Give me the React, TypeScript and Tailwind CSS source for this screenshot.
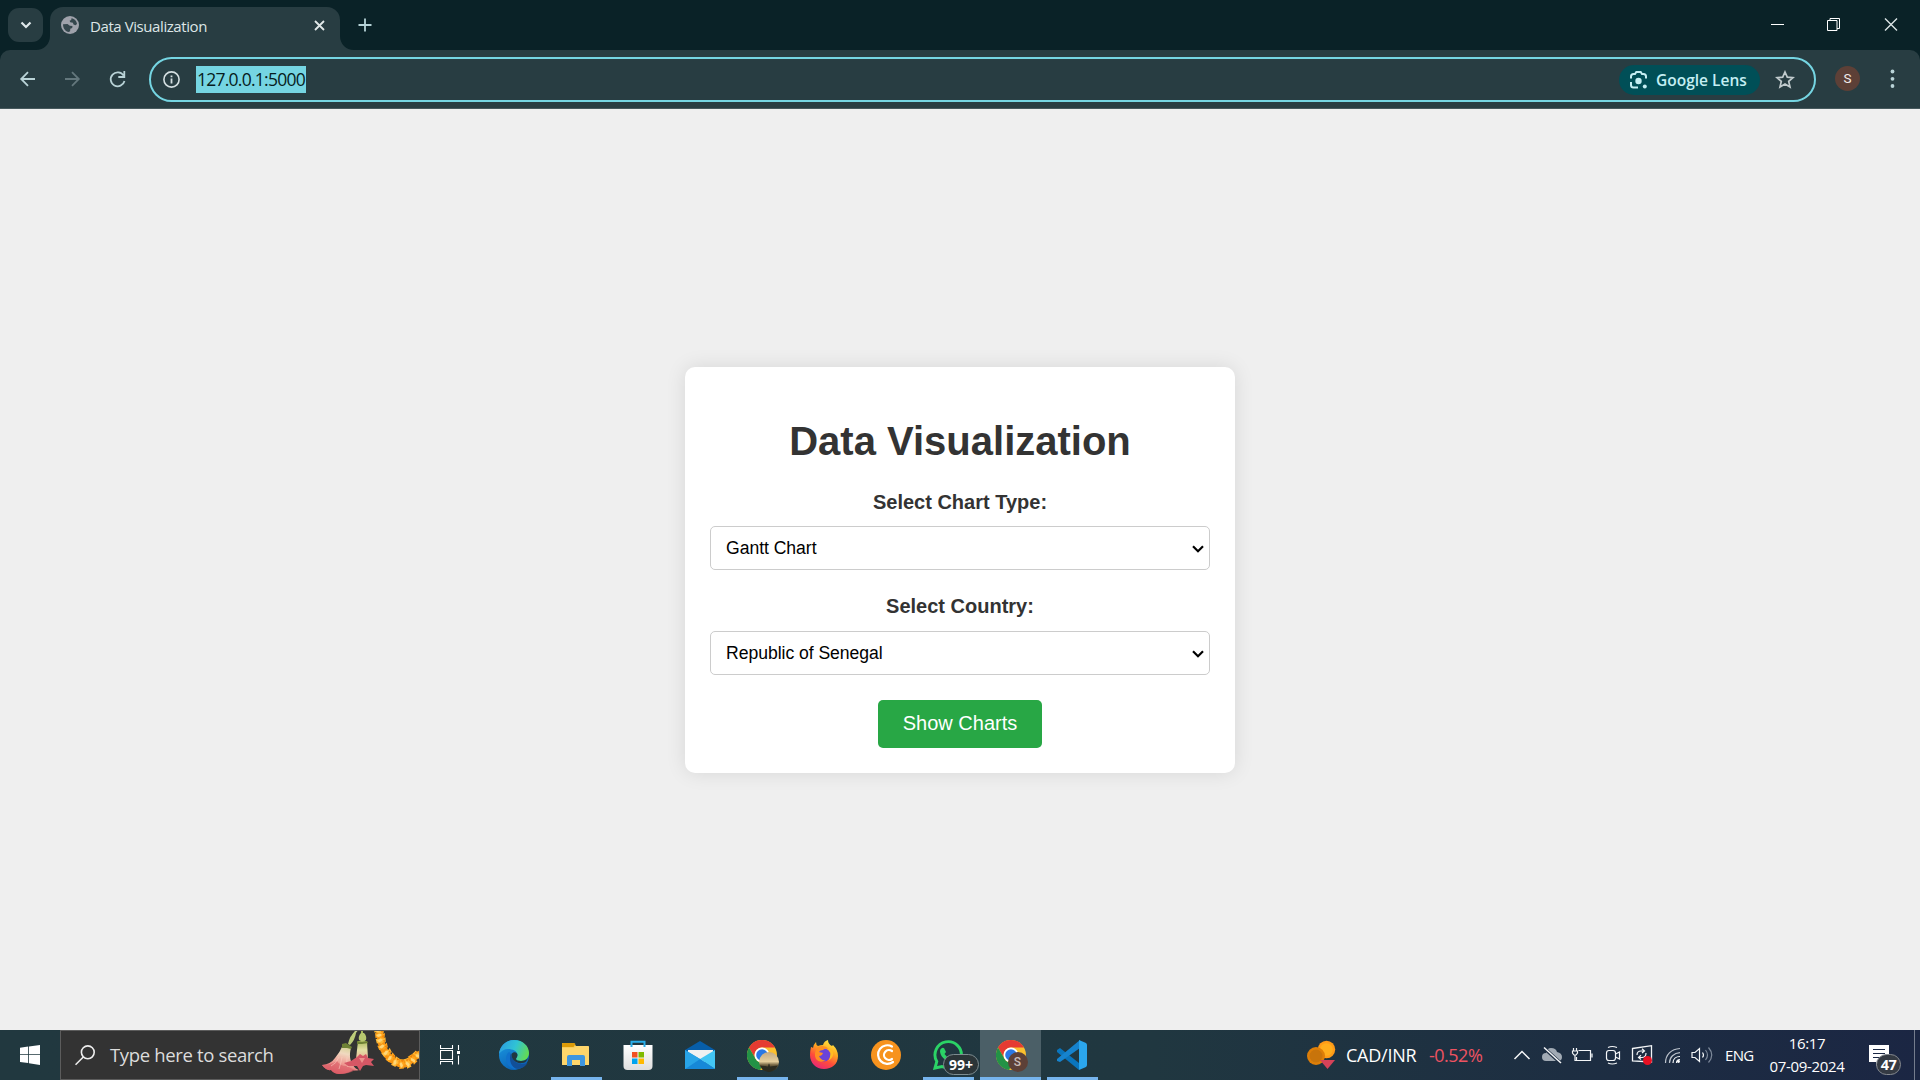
import React from "react";

const SEGOE = "font-['Open_Sans','Noto_Sans',sans-serif]";

function TabStrip() {
  return (
    <div className="flex h-[50px] items-start bg-[#0a2227]">
      <div className="ml-2 mt-2 flex h-[34px] w-[35px] items-center justify-center rounded-[11px] bg-[#283d42]">
        <svg width="12" height="8" viewBox="0 0 12 8" fill="none" stroke="#dfe9eb" strokeWidth="2.2">
          <path d="M1.5 1.5 6 6l4.500-4.500" />
        </svg>
      </div>
      <div className="mt-[7px] flex h-[43px] items-end">
        <svg className="-ml-[7px]" width="14" height="14" viewBox="0 0 14 14">
          <path d="M14 0v14H0C8 14 14 8 14 0z" fill="#283d42" />
        </svg>
        <div className="flex h-[43px] w-[290px] items-center rounded-t-[13px] bg-[#283d42] pb-[7px]">
          <svg className="ml-[11px]" width="18" height="18" viewBox="0 0 18 18">
            <circle cx="9" cy="9" r="9" fill="#9fa2ab" />
            <path d="M10.500 2.200C13.500 2.600 15.800 5 16 8l-1.500 1.200-2-.7-.6-1.700-2.700-.6-.6-1.400 1.600-.8z" fill="#35474d" />
            <path d="M2 8.200 6.500 8l2.300 1.700 2.700.3-.3 2-1.900.7-.2 2.600-1.400.7C4.500 15.300 2 12.500 2 8.200z" fill="#35474d" />
          </svg>
          <span className={`${SEGOE} ml-[11px] w-[119px] whitespace-nowrap pt-px text-[15px] leading-5 tracking-[-0.42px] text-[#dde6e7]`}>Data Visualization</span>
          <svg className="ml-[105px]" width="11" height="11" viewBox="0 0 11 11" stroke="#e1e8e8" strokeWidth="1.800">
            <path d="M1 1l9 9M10 1l-9 9" />
          </svg>
        </div>
        <svg width="14" height="14" viewBox="0 0 14 14">
          <path d="M0 0v14h14C6 14 0 8 0 0z" fill="#283d42" />
        </svg>
      </div>
      <svg className="ml-[4px] mt-[18px]" width="14" height="14" viewBox="0 0 14 14" stroke="#b6d3d7" strokeWidth="1.800">
        <path d="M7 .5v13M.5 7h13" />
      </svg>
      <div className="ml-auto flex h-[50px]">
        <svg width="169" height="50" viewBox="0 0 169 50" fill="none" stroke="#fff">
          <path d="M20 24.500h13M76.500 20.500h9.500v10h-9.500zM79 20.500v-2h9.500v10H86" />
          <path d="M134 18.500l12 12M146 18.500l-12 12" stroke="#dce5e6" strokeWidth="1.400" />
        </svg>
      </div>
    </div>
  );
}

function Toolbar() {
  return (
    <div className="h-[59px] bg-[#0a2227]">
      <div className="flex h-[59px] items-start rounded-t-[10px] border-b border-[#47595d] bg-[#283d42]">
        <svg width="149" height="58" viewBox="0 0 149 58" fill="none" strokeWidth="1.800">
          <path d="M35 29H21.500M28 22.200 21.200 29l6.800 6.800" stroke="#b9d3d7" />
          <path d="M65 29h13.500M72 22.200 78.800 29 72 35.800" stroke="#63777c" />
          <path d="M123.600 25.500A7 7 0 1 0 124.500 31M124.300 21v6h-6" stroke="#b9d3d7" />
        </svg>
        <div className="mt-[7px] flex h-[45px] w-[1667px] items-center rounded-full border-2 border-[#75d5e2]">
          <svg className="ml-3" width="17" height="17" viewBox="0 0 17 17">
            <circle cx="8.500" cy="8.500" r="7.600" fill="none" stroke="#d4dfe1" strokeWidth="1.600" />
            <path d="M7.600 7.500h1.800v5H7.600zM7.600 4.500h1.800v1.800H7.600z" fill="#d4dfe1" />
          </svg>
          <div className="ml-4 flex h-[27px] w-[110px] items-center overflow-hidden bg-[#75d5e2] pl-px">
            <span className={`${SEGOE} whitespace-nowrap text-[17.500px] tracking-[-0.750px] text-[#071c20]`}>127.0.0.1:5000</span>
          </div>
          <div className="ml-auto mr-[19px] flex items-center">
            <div className="mt-px flex h-[30px] w-[141px] items-center rounded-full bg-[#004f57] pl-[10px]">
              <svg width="20" height="20" viewBox="0 0 20 20" fill="none" stroke="#c4eef3" strokeWidth="2">
                <path d="M2 8.500V6.500q0-2.500 2.500-2.500H6l1.300-2h4.400L13 4h1.500Q17 4 17 6.500v2M2 12v3q0 2.500 2.500 2.500H9" />
                <circle cx="9.500" cy="11" r="3.200" fill="#c4eef3" stroke="none" />
                <circle cx="15.800" cy="16.400" r="2" fill="#c4eef3" stroke="none" />
              </svg>
              <span className={`${SEGOE} ml-[7px] whitespace-nowrap pt-px text-[15.500px] font-semibold text-[#c4eef3]`}>Google Lens</span>
            </div>
            <svg className="ml-[15px]" width="20" height="19" viewBox="0 0 20 19" fill="none" stroke="#c1cbcd" strokeWidth="1.700">
              <path d="M10 2 12.300 7.200 18 7.700 13.700 11.400 15 17 10 14 5 17l1.300-5.600L2 7.700l5.700-.5z" />
            </svg>
          </div>
        </div>
        <div className="ml-[19px] mt-4 flex size-[25px] items-center justify-center rounded-full bg-[#5d4037] font-['Roboto',sans-serif] text-[13.500px] text-[#f3ecea]">S</div>
        <svg className="ml-[30px] mt-[19px]" width="5" height="20" viewBox="0 0 5 20" fill="#b9d3d7">
          <circle cx="2.500" cy="2.500" r="1.900" />
          <circle cx="2.500" cy="9.800" r="1.900" />
          <circle cx="2.500" cy="17" r="1.900" />
        </svg>
      </div>
    </div>
  );
}

function SelectBox({ value }: { value: string }) {
  return (
    <div className="flex h-[44px] w-full items-center rounded-[5px] border border-[#ccc] bg-white pl-[15px] pr-[5px] text-[17.600px] text-black">
      <span className="tracking-[-0.040px]">{value}</span>
      <svg className="ml-auto mt-px" width="12" height="8" viewBox="0 0 12 8" fill="none" stroke="#000" strokeWidth="2.200">
        <path d="M1 1.300 6 6.200l5-4.900" />
      </svg>
    </div>
  );
}

function FormCard() {
  return (
    <div className="flex h-[406px] w-[550px] flex-col items-center rounded-[10px] bg-white px-[25px] pt-[51px] font-['Liberation_Sans',Arial,sans-serif] shadow-[0_0_20px_rgba(0,0,0,0.1)]">
      <h1 className="h-[46px] whitespace-nowrap text-[40px] font-bold leading-[46px] text-[#333]">Data Visualization</h1>
      <label className="mt-[26px] h-6 text-[20px] font-bold leading-6 text-[#333]">Select Chart Type:</label>
      <div className="mt-3 w-full"><SelectBox value="Gantt Chart" /></div>
      <label className="mt-[24px] h-6 text-[20px] font-bold leading-6 text-[#333]">Select Country:</label>
      <div className="mt-[13px] w-full"><SelectBox value="Republic of Senegal" /></div>
      <button className="mt-[25px] h-12 w-[164px] rounded-[5px] bg-[#28a745] pb-[2px] text-[20px] text-white">Show Charts</button>
    </div>
  );
}

function SearchArt() {
  const petals = [
    [6, 0, 5], [7, 5, 0], [8, 10, -8], [10, 16, -18], [14, 22, -32], [18, 27, -45],
    [23, 31, -60], [29, 33, -90], [35, 32, -112], [40, 28, -130], [45, 24, -140],
  ];
  return (
    <svg width="98" height="48" viewBox="0 0 98 48" className="ml-auto">
      <defs>
        <linearGradient id="bloom" x1=".7" y1="0" x2=".4" y2="1">
          <stop offset="0" stopColor="#cdd08a" />
          <stop offset=".3" stopColor="#f0d9c0" />
          <stop offset=".62" stopColor="#ef9d94" />
          <stop offset="1" stopColor="#d9525f" />
        </linearGradient>
        <linearGradient id="tube" x1="0" y1="0" x2="0" y2="1">
          <stop offset="0" stopColor="#a9b95c" />
          <stop offset=".5" stopColor="#e3e0a4" />
          <stop offset="1" stopColor="#e9b596" />
        </linearGradient>
      </defs>
      <path d="M36-1 32 4" stroke="#c5d08a" strokeWidth="2" />
      <path d="M34 1q-5 3-7 12l2 1q5-5 6-12z" fill="#bccb78" />
      <path d="M41-1v4" stroke="#a6b75a" strokeWidth="2" />
      <path d="M40 2q-3 3-2 7l4 2 3-2q1-4-2-7z" fill="#b7c76f" />
      <path d="M22 14l8 3c-2 7-1 13 2 17q2 4 6 5-4 1-6 0-6 4-14 4-5 0-8-4-5 1-9-5 9-1 13-7 5-6 8-13z" fill="url(#bloom)" />
      <path d="M1 34q9 0 15-4 3 5 9 5 5 2 9 4-6 4-15 4-6 0-9-4-5 1-9-5z" fill="#dc5f69" opacity=".65" />
      <path d="M10 35q5-2 8-9M18 38q2-6 3-12M27 36q-2-4-1-10" stroke="#fbd0c4" strokeWidth=".8" fill="none" opacity=".7" />
      <path d="M37 10h9l1 18H35z" fill="url(#tube)" />
      <path d="M36 26l3-3 3 2 3-2 2 4 6 1-3 3 3 4-8-1-3 1-3 5-3-5-9 0-4-3 7-2z" fill="#d65765" />
      <path d="M38 27l3 5 3-5" fill="#ec918c" />
      <path d="M21 13l4-1 6 4-1 2-4-1-5 0zM36 10l5 1 5-1 1 2-6 1-5 0z" fill="#6f8235" />
      <g transform="translate(52 0)">
        <path d="M6-3 8 11q4 15 15 20 8 5 15-2 4-4 9-6" fill="none" stroke="#f79412" strokeWidth="7" />
        {petals.map(([x, y, r], i) => (
          <g key={i} transform={`translate(${x} ${y}) rotate(${r})`}>
            <path d="M-5-3l3 1 2-1 3 1 2-1-.5 5-2.500-.5-2 1.500-2-1.500-2.500.5z" fill={i % 2 ? "#ffa51c" : "#ffb935"} />
            <path d="M-4-1 0-2.500 2-1 0 .5-2 1z" fill="#ffd678" />
            <path d="M2 0l2-1-.5 3z" fill="#ee7d05" />
          </g>
        ))}
      </g>
    </svg>
  );
}

function EdgeIcon() {
  return (
    <svg width="30" height="30" viewBox="0 0 30 30">
      <defs>
        <linearGradient id="edgeTop" x1="0" y1=".3" x2="1" y2=".6">
          <stop offset="0" stopColor="#2b9de0" />
          <stop offset=".5" stopColor="#30c3d5" />
          <stop offset="1" stopColor="#65dc4e" />
        </linearGradient>
        <linearGradient id="edgeMid" x1="0" y1="0" x2=".5" y2="1">
          <stop offset="0" stopColor="#1b9be4" />
          <stop offset="1" stopColor="#0b63b7" />
        </linearGradient>
      </defs>
      <circle cx="15" cy="15" r="15" fill="url(#edgeMid)" />
      <path d="M0 14C1 5 8 0 15 0c9 0 15 6 15 13 0 5-4 8-8 8-3 0-5-1-5-2 0-1 1.500-2 1.500-4 0-4-5-6-9.500-6-4 0-7 2-9 5z" fill="url(#edgeTop)" />
      <path d="M12 13c-3 3-3 9 1 13 3 3 8 4 13 0 1-1 2-2 2.500-3-9 3.500-16-2-16.500-10z" fill="#124f98" />
      <path d="M10 12c-4 3-4 10 0 14 2 2 5 3.500 8 3.500-4-2-7-6-7-11 0-2 0-3 1-5z" fill="#1071cc" />
      <path d="M12.500 14c2-3 6-2 6 1 0 2-1.500 3-1.500 4s2 2 5 2c3 0 5.500-1 7-3-1 3-3 5-6 5-6 1-11-4-10.500-9z" fill="#21373f" />
    </svg>
  );
}

function ExplorerIcon() {
  return (
    <svg width="30" height="30" viewBox="0 0 30 30">
      <path d="M1 4q0-1 1-1h11l2 3h11q2 0 2 2v17H1z" fill="#f9cc57" />
      <path d="M1 4q0-1 1-1h11l1.500 1-2 3H1z" fill="#dc9b08" />
      <path d="M1 8h12l2-2h12q1 0 1 1v17q0 1-1 1H2q-1 0-1-1z" fill="#fed66b" />
      <path d="M6 26V17q0-2 2-2h14q2 0 2 2v9h-5v-6h-8v6z" fill="#3e96df" />
    </svg>
  );
}

function StoreIcon() {
  return (
    <svg width="30" height="30" viewBox="0 0 30 30">
      <defs>
        <linearGradient id="bag" x1="0" y1="0" x2="0" y2="1">
          <stop offset="0" stopColor="#fff" />
          <stop offset="1" stopColor="#dedede" />
        </linearGradient>
      </defs>
      <path d="M.5 5h29v21q0 4-4 4h-21q-4 0-4-4z" fill="url(#bag)" />
      <path d="M8.500 7V1.800h13V7" fill="none" stroke="#28aeea" strokeWidth="2" />
      <path d="M9 12h5.500v5.500H9z" fill="#f25022" />
      <path d="M15.500 12H21v5.500h-5.500z" fill="#7fba00" />
      <path d="M9 18.500h5.500V24H9z" fill="#00a4ef" />
      <path d="M15.500 18.500H21V24h-5.500z" fill="#ffb900" />
    </svg>
  );
}

function MailIcon() {
  return (
    <svg width="30" height="30" viewBox="0 0 30 30">
      <path d="M0 10 15 1l15 9v8H0z" fill="#075ea9" />
      <path d="M3 10h25v12H3z" fill="#f1f1f1" />
      <path d="M0 10 15 19 30 29H0z" fill="#2499df" />
      <path d="M30 10 15 19 30 29z" fill="#43c6f4" />
      <path d="M0 29 15 19l15 10z" fill="#1688d8" />
      <path d="M0 10 15 19 0 29z" fill="#28a4e7" />
    </svg>
  );
}

function ChromeMark() {
  return (
    <>
      <circle cx="15" cy="15" r="15" fill="#fbc02d" />
      <path d="M2 7.500A15 15 0 0 1 28 7.500H15a7.500 7.500 0 0 0-6.500 11.200z" fill="#e53b32" />
      <path d="M2 7.500 8.500 18.800A7.500 7.500 0 0 0 17 22.300L13 30A15 15 0 0 1 2 7.500z" fill="#239246" />
      <circle cx="15" cy="15" r="7.500" fill="#fff" />
      <circle cx="15" cy="15" r="5.800" fill="#2a78e4" />
    </>
  );
}

function ChromeIcon({ profile }: { profile: "photo" | "letter" }) {
  return (
    <div className="relative size-[30px]">
      <svg width="34" height="34" viewBox="0 0 34 34" className="max-w-none">
        <defs>
          <linearGradient id="sunset" x1="0" y1="0" x2="0" y2="1">
            <stop offset="0" stopColor="#c3aa84" />
            <stop offset=".48" stopColor="#e6cf9c" />
            <stop offset=".65" stopColor="#716241" />
            <stop offset="1" stopColor="#24271e" />
          </linearGradient>
        </defs>
        <ChromeMark />
        {profile === "photo" && (
          <>
            <circle cx="22" cy="22" r="10" fill="url(#sunset)" />
            <path d="M13 25.500l5 .5 3 .5.500-2 .5-1 .5 1 .5 2 4-.5 4-.5-3 4-6 2.500-6-2z" fill="#2c2c20" />
          </>
        )}
      </svg>
      {profile === "letter" && (
        <div className="absolute left-3 top-3 flex size-5 items-center justify-center rounded-full bg-[#5d4037] font-['Roboto',sans-serif] text-[12px] font-medium text-[#c9bdb8]">S</div>
      )}
    </div>
  );
}

function FirefoxIcon() {
  return (
    <svg width="30" height="30" viewBox="0 0 30 30">
      <defs>
        <linearGradient id="fox" x1=".8" y1="0" x2=".3" y2="1">
          <stop offset="0" stopColor="#fff04a" />
          <stop offset=".35" stopColor="#ffad20" />
          <stop offset=".68" stopColor="#ff4d3a" />
          <stop offset="1" stopColor="#e72678" />
        </linearGradient>
      </defs>
      <path d="M2 7q1 0 2 1 0-3 3-6 0 3 2 4 2-1 5-1 1-4 5-5 0 4 4 6l1-1q5 5 5 11c0 8-6 13-14 13S1 23 1 15q0-4 1-8z" fill="url(#fox)" />
      <circle cx="15" cy="15" r="6.500" fill="#6a43d8" />
      <path d="M9 7q6-3 11 2-4-1-6 1-3 0-4 2l4 1q-1 3-4 3 2 5 7 4-6 4-10-1-3-6 2-12z" fill="#ff8f22" />
      <path d="M18 8q5 3 3 9 0 2-2 4 6-3 5-9-1-3-6-4z" fill="#ffbd23" />
    </svg>
  );
}

function CoinCIcon() {
  return (
    <svg width="30" height="30" viewBox="0 0 30 30" fill="none" stroke="#fff" strokeLinecap="round">
      <circle cx="15" cy="15" r="15" fill="#f7931e" stroke="none" />
      <path d="M21 6.500A9.300 9.300 0 1 0 22 22M21 11a5 5 0 1 0 0 8" strokeWidth="2.200" />
    </svg>
  );
}

function WhatsAppIcon() {
  return (
    <div className="relative size-[30px]">
      <svg width="30" height="30" viewBox="0 0 30 30">
        <path d="M2 28 3.800 21.500A13.200 13.200 0 1 1 9 26.500z" fill="none" stroke="#2bd366" strokeWidth="2.900" />
        <path d="M9 8q2-1 3 2l1 2-1.500 2q2 3 5 4l2-1.500 3.500 2q0 4-4 3.500C12 21 7 16 7 11q0-2 2-3z" fill="#2bd366" />
      </svg>
      <div className={`${SEGOE} absolute left-[10px] top-[14px] flex h-[21px] w-9 items-center justify-center rounded-full border border-[#7d8c90] bg-[#2b3538] text-[14px] font-bold text-white`}>99+</div>
    </div>
  );
}

function CodeIcon() {
  return (
    <svg width="30" height="30" viewBox="0 0 30 30">
      <path d="M0 10 3 8l19 15v7L0 12z" fill="#0a75bd" />
      <path d="M0 19v2l3 1L23 8V0L0 19z" fill="#1683ce" />
      <path d="M22 0l7 3q1 1 1 2v20q0 1-1 2l-7 3z" fill="#2ba6ed" />
    </svg>
  );
}

function TaskItem({ children, running, active }: { children: React.ReactNode; running?: boolean; active?: boolean }) {
  return (
    <div className={`relative flex h-[50px] items-center justify-center ${active ? "ml-px w-[61px] bg-[#4b5f67]" : "w-[62px]"}`}>
      {children}
      {running && <div className={`absolute bottom-0 h-[3px] bg-[#76b4ed] ${active ? "inset-x-0" : "inset-x-[6px] right-[5px]"}`} />}
    </div>
  );
}

function Tray() {
  return (
    <svg width="205" height="50" viewBox="0 0 205 50" fill="none" stroke="#f4f6f8" strokeWidth="1.200">
      <path d="M4.500 29 12 21.500l7.500 7.500" strokeWidth="1.500" />
      <path d="M36 31q-4 0-4-4t4-4q1-5 5-5 5 0 6 4 5 1 5 5 0 4-4 4z" fill="#a1aab4" stroke="none" />
      <path d="M33.500 17.500l17 15.500" stroke="#1d2d41" strokeWidth="3.200" />
      <path d="M34 17.500 51 33" strokeWidth="1.500" />
      <path d="M68.500 20.500H80.500v10H66.500V27M82 23.500v4" />
      <path d="M63.500 18v3M66.500 18v3M62.500 21h5v2l-1.500 2h-2l-1.500-2zM65 25v5.500h2" />
      <rect x="96.500" y="20.500" width="9" height="10" rx="2.500" />
      <path d="M105.500 24l4-2v7l-4-2M98 17.500q4-2 9 0M98 33q4 2 9 0" />
      <path d="M122.500 18.500l19-2.800V32l-19-1z" strokeWidth="1.300" />
      <path d="M127 25q0-4 4-4h3M132 18.700l2.500 2.300-2.500 2M136 23q0 4.500-4 4.500h-3M131 25.200l-2.500 2.300 2.500 2" />
      <circle cx="137.500" cy="30.500" r="4.500" fill="#e81123" stroke="none" />
      <path d="M155.500 33C155.500 25 161 19 170 18.500M159.500 33C159.500 27 164 23 170 22.700" stroke="#bcc3cc" />
      <path d="M163 33c0-4 3-6.500 7-6.500M166.500 33c0-2 1.500-3.500 3.500-3.500" />
      <circle cx="168.500" cy="31.500" r="1.400" fill="#fff" stroke="none" />
      <path d="M182 22.500h3l4.500-4v13l-4.500-4h-3z" />
      <path d="M192.500 22.500q2 2.500 0 5" />
      <path d="M195.500 20q4 5 0 10M198.500 17.500q6.500 7.500 0 15" stroke="#7d899a" />
    </svg>
  );
}

function Taskbar() {
  return (
    <div className={`${SEGOE} flex h-[50px] bg-linear-to-r from-[#21383f] via-[#203740] via-60% to-[#1b2643] text-white`}>
      <div className="flex w-[60px] items-center justify-center">
        <svg width="20" height="20" viewBox="0 0 20 20" fill="#fff">
          <path d="M0 2.700 8.200 1.500v7.700H0zM9 1.400 20 0v9.200H9zM0 10.100h8.200v8L0 17zM9 10.100h11V20L9 18.300z" />
        </svg>
      </div>
      <div className="flex w-[360px] items-center border border-[#5c5c5c] bg-[#333]">
        <svg className="ml-[14px]" width="20" height="21" viewBox="0 0 20 21" fill="none" stroke="#eee" strokeWidth="1.600">
          <circle cx="12.800" cy="7.300" r="6.400" />
          <path d="M8.300 12 .5 19.800" />
        </svg>
        <span className="ml-[15px] whitespace-nowrap text-[18.500px] tracking-[-0.350px] text-[#dcdcdc]">Type here to search</span>
        <SearchArt />
      </div>
      <div className="flex w-[63px] items-center pl-5">
        <svg width="20" height="20" viewBox="0 0 20 20" fill="none" stroke="#fff" strokeWidth="1.100">
          <path d="M.5 0v3.500h12V0M.5 5.500h12v9H.5zM.5 19.500v-3h12v3M18.500 0v5M18.500 10.500v9" />
          <path d="M17 6h3v3h-3z" fill="#fff" stroke="none" />
        </svg>
      </div>
      <TaskItem><EdgeIcon /></TaskItem>
      <TaskItem running><ExplorerIcon /></TaskItem>
      <TaskItem><StoreIcon /></TaskItem>
      <TaskItem><MailIcon /></TaskItem>
      <TaskItem running><ChromeIcon profile="photo" /></TaskItem>
      <TaskItem><FirefoxIcon /></TaskItem>
      <TaskItem><CoinCIcon /></TaskItem>
      <TaskItem running><WhatsAppIcon /></TaskItem>
      <TaskItem running active><ChromeIcon profile="letter" /></TaskItem>
      <TaskItem running><CodeIcon /></TaskItem>
      <div className="ml-auto flex items-center">
        <svg width="29" height="30" viewBox="0 0 29 30">
          <circle cx="19.500" cy="9.500" r="8.700" fill="#ff9b18" />
          <circle cx="19.500" cy="9.500" r="6.300" fill="#ffad1c" />
          <circle cx="9" cy="16" r="9" fill="#dd7e08" />
          <circle cx="9" cy="16" r="6.500" fill="#c8740b" />
          <path d="M13 20h15l-7.500 9z" fill="#d64259" />
        </svg>
        <span className="ml-[10px] w-[83px] whitespace-nowrap text-[18px] tracking-[-0.250px]">CAD/INR</span>
        <span className="w-[81px] whitespace-nowrap text-[18px] tracking-[-0.500px] text-[#ee5361]">-0.52%</span>
        <Tray />
        <span className="ml-[10px] w-[34px] whitespace-nowrap pt-px text-[15px] tracking-[-0.700px]">ENG</span>
        <div className="flex w-[96px] flex-col items-center whitespace-nowrap text-[15px] leading-[23px] tracking-[-0.350px]">
          <span>16:17</span>
          <span>07-09-2024</span>
        </div>
        <div className="relative ml-[14px] h-[50px] w-[45px]">
          <svg width="20" height="50" viewBox="0 0 20 50">
            <path d="M0 15h20v17h-9l-4 4v-4H0z" fill="#fff" />
            <path d="M4 19.500h12M4 23.500h12M4 27.500h8" stroke="#1b2844" />
          </svg>
          <div className="absolute left-[7px] top-[24px] flex h-[21px] w-[25px] items-center justify-center rounded-full border border-[#85898f] bg-[#343a43] text-[14.500px] font-bold tracking-[-0.500px]">47</div>
        </div>
        <div className="mr-[5px] h-[50px] w-px bg-[#747c8d]" />
      </div>
    </div>
  );
}

export default function App() {
  return (
    <div className="flex h-[1080px] w-[1920px] flex-col overflow-hidden bg-[#efefef]">
      <TabStrip />
      <Toolbar />
      <main className="flex h-[921px] items-start justify-center bg-[#efefef] pt-[258px]">
        <FormCard />
      </main>
      <Taskbar />
    </div>
  );
}
